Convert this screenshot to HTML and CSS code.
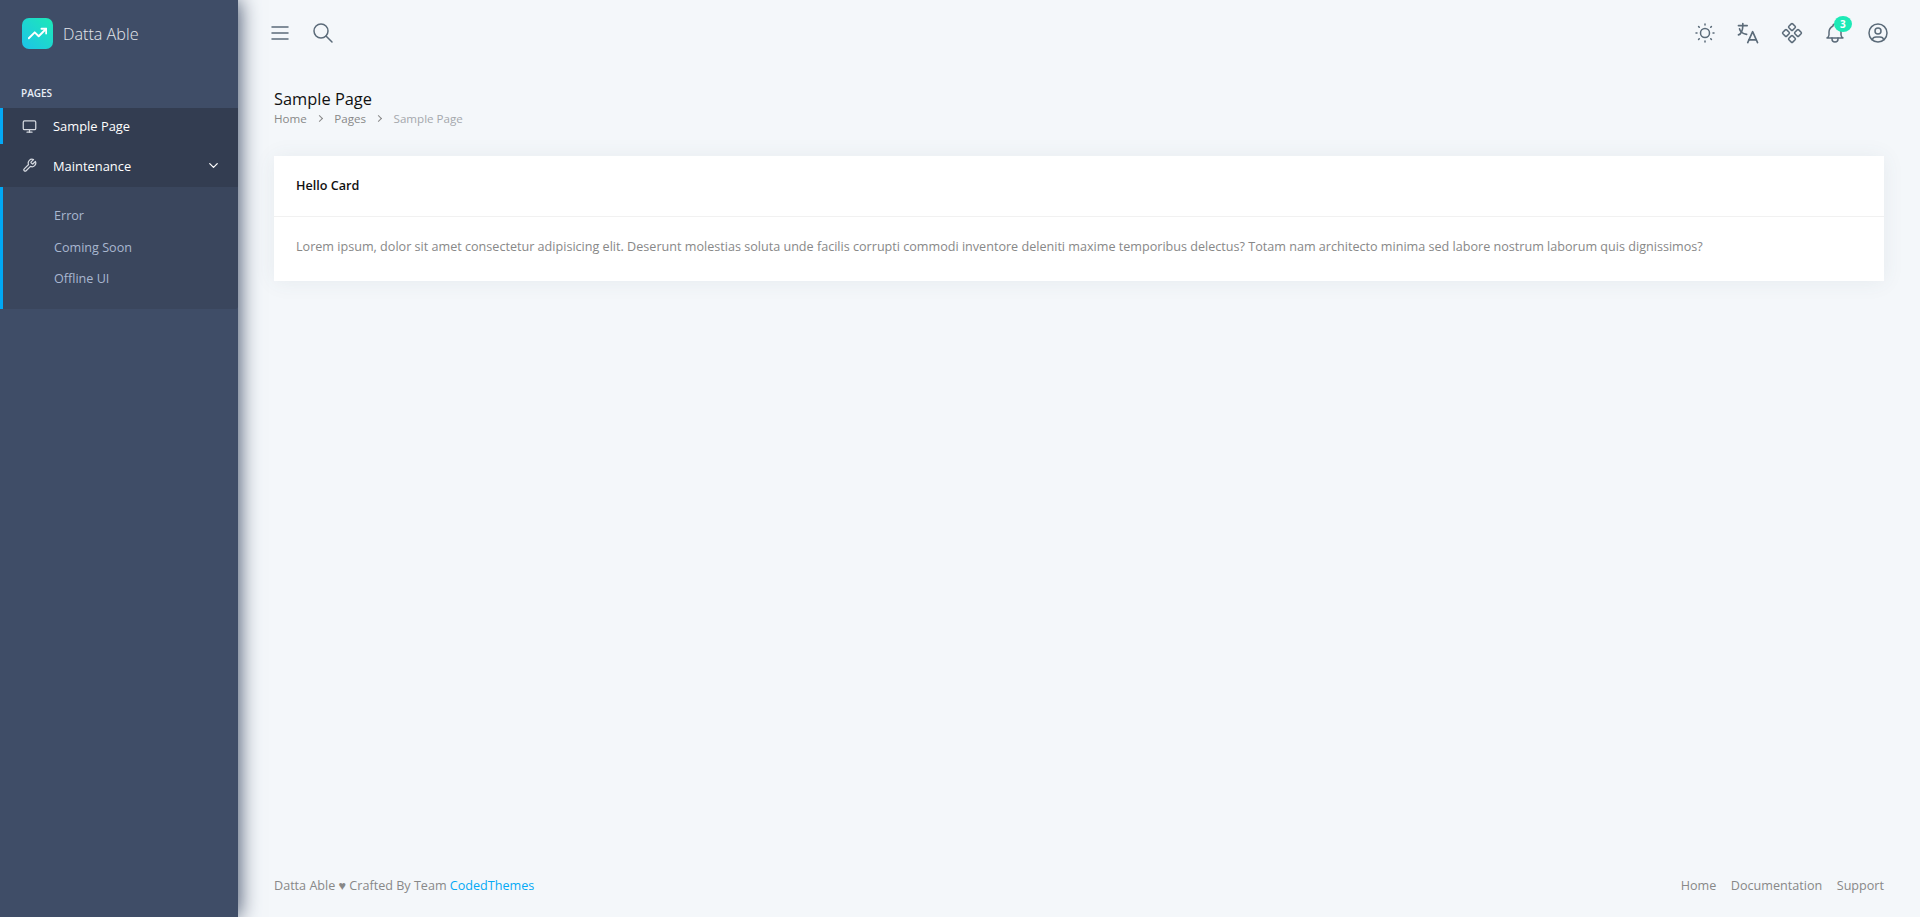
FILE: index.html
```html
<!DOCTYPE html>
<html lang="en">
<head>
  <meta charset="UTF-8">
  <meta name="viewport" content="width=device-width, initial-scale=1.0">
  <title>Sample Page | Datta Able</title>
  <link rel="stylesheet" href="styles.css">
</head>
<body>

<div class="app">
  <nav class="sidebar">
    <div class="brand">
      <span class="brand-logo">
        <svg viewBox="0 0 24 24" width="19" height="19"><polyline points="23 6 13.5 15.5 8.5 10.5 1 18"/><polyline points="17 6 23 6 23 12"/></svg>
      </span>
      <span class="brand-name">Datta Able</span>
    </div>

    <div class="nav-caption">Pages</div>

    <a class="nav-item active" href="#">
      <svg class="nav-icon" viewBox="0 0 24 24"><rect x="2" y="3" width="20" height="14" rx="2"/><line x1="8" y1="21" x2="16" y2="21"/><line x1="12" y1="17" x2="12" y2="21"/></svg>
      <span>Sample Page</span>
    </a>
    <div class="nav-group">
      <a class="nav-item open" href="#">
        <svg class="nav-icon" viewBox="0 0 24 24"><path d="M14.7 6.3a1 1 0 0 0 0 1.4l1.6 1.6a1 1 0 0 0 1.4 0l3.77-3.77a6 6 0 0 1-7.94 7.94l-6.91 6.91a2.12 2.12 0 0 1-3-3l6.91-6.91a6 6 0 0 1 7.94-7.94l-3.76 3.76z"/></svg>
        <span>Maintenance</span>
        <svg class="nav-caret" viewBox="0 0 24 24"><polyline points="6 9 12 15 18 9"/></svg>
      </a>
      <div class="nav-sub">
        <a href="#">Error</a>
        <a href="#">Coming Soon</a>
        <a href="#">Offline UI</a>
      </div>
    </div>
  </nav>

  <div class="main">
    <header class="topbar">
      <div class="topbar-group left">
        <svg class="top-icon" viewBox="0 0 24 24"><path d="M4 6h16"/><path d="M4 12h16"/><path d="M4 18h16"/></svg>
        <svg class="top-icon" viewBox="0 0 24 24"><circle cx="10" cy="10" r="7"/><path d="M21 21l-6 -6"/></svg>
      </div>
      <div class="topbar-group right">
        <svg class="top-icon" viewBox="0 0 24 24"><circle cx="12" cy="12" r="4.500"/><path d="M3 12h1m8 -9v1m8 8h1m-9 8v1m-6.400 -15.400l.7 .7m12.100 -.7l-.7 .7m0 11.400l.7 .7m-12.100 -.7l-.7 .7"/></svg>
        <svg class="top-icon" viewBox="1.250 0.750 22 22"><path d="M3.500 5h8"/><path d="M7.500 3v2c0 4.418 -1.739 8 -4 8.500"/><path d="M4.500 8c.5 2.500 3 4.500 6.500 5"/><path d="M12 20.500l4.500 -10l4.500 10"/><path d="M19.800 18h-6.600"/></svg>
        <svg class="top-icon" viewBox="0 0 24 24"><rect x="9.300" y="3.300" width="5.400" height="5.400" rx="1" transform="rotate(45 12 6)"/><rect x="9.300" y="15.300" width="5.400" height="5.400" rx="1" transform="rotate(45 12 18)"/><rect x="3.300" y="9.300" width="5.400" height="5.400" rx="1" transform="rotate(45 6 12)"/><rect x="15.300" y="9.300" width="5.400" height="5.400" rx="1" transform="rotate(45 18 12)"/></svg>
        <span class="bell">
          <svg class="top-icon" viewBox="0 0 24 24"><path d="M10 5a2 2 0 1 1 4 0a7 7 0 0 1 4 6v3a4 4 0 0 0 2 3h-16a4 4 0 0 0 2 -3v-3a7 7 0 0 1 4 -6"/><path d="M9 17v1a3 3 0 0 0 6 0v-1"/></svg>
          <span class="badge">3</span>
        </span>
        <svg class="top-icon" viewBox="0 0 24 24"><circle cx="12" cy="12" r="9"/><circle cx="12" cy="10" r="3"/><path d="M6.168 18.849a4 4 0 0 1 3.832 -2.849h4a4 4 0 0 1 3.834 2.855"/></svg>
      </div>
    </header>

    <main class="content">
      <div class="page-head">
        <h1>Sample Page</h1>
        <ul class="breadcrumb">
          <li><a href="#">Home</a></li>
          <li><a href="#">Pages</a></li>
          <li class="current">Sample Page</li>
        </ul>
      </div>

      <section class="card">
        <div class="card-head">Hello Card</div>
        <div class="card-body">Lorem ipsum, dolor sit amet consectetur adipisicing elit. Deserunt molestias soluta unde facilis corrupti commodi inventore deleniti maxime temporibus delectus? Totam nam architecto minima sed labore nostrum laborum quis dignissimos?</div>
      </section>
    </main>

    <footer class="footer">
      <div>Datta Able ♥ Crafted By Team <a class="footer-brand" href="#">CodedThemes</a></div>
      <div class="footer-links">
        <a href="#">Home</a>
        <a href="#">Documentation</a>
        <a href="#">Support</a>
      </div>
    </footer>
  </div>
</div>

</body>
</html>
```

FILE: styles.css
```css
html, body {
  margin: 0;
  padding: 0;
  height: 100%;
}

body {
  font-family: "Open Sans", sans-serif;
  font-size: 12.6px;
  color: #888;
  background: #f4f7fa;
  overflow: hidden;
}

a {
  color: inherit;
  text-decoration: none;
}

svg {
  fill: none;
  stroke: currentColor;
  stroke-linecap: round;
  stroke-linejoin: round;
}

.app {
  display: flex;
  height: 100%;
}

.sidebar {
  flex: 0 0 238px;
  background: #3f4d67;
  color: #fff;
  box-shadow: 1px 0 20px 0 #3f4d67;
  z-index: 2;
}

.brand {
  display: flex;
  align-items: center;
  gap: 10px;
  height: 66px;
  padding: 0 22px;
}

.brand-logo {
  display: flex;
  align-items: center;
  justify-content: center;
  width: 31px;
  height: 31px;
  border-radius: 7px;
  background: linear-gradient(-135deg, #1de9b6 0%, #1dc4e9 100%);
}

.brand-logo svg {
  stroke-width: 2.4;
}

.brand-name {
  padding-top: 2px;
  font-size: 16.2px;
  font-weight: 300;
  color: #e4e7ec;
}

.nav-caption {
  height: 22px;
  padding: 20px 21px 0;
  font-size: 10px;
  line-height: 14px;
  font-weight: 600;
  text-transform: uppercase;
  color: #e8edf7;
}

.nav-item {
  display: flex;
  align-items: center;
  height: 43px;
  padding: 0 17px 0 22px;
  box-sizing: border-box;
  font-size: 12.9px;
  color: #fff;
  background: #333d51;
}

.nav-item.active {
  height: 36px;
  padding: 0 17px 0 19px;
  border-left: 3px solid #04a9f5;
}

.nav-icon {
  flex: none;
  width: 15px;
  height: 15px;
  margin-right: 16px;
  stroke-width: 2;
  color: #d5d9e0;
}

.nav-caret {
  width: 15px;
  height: 15px;
  margin-left: auto;
  stroke-width: 2;
}

.nav-sub {
  display: flex;
  flex-direction: column;
  height: 122px;
  padding-top: 14px;
  box-sizing: border-box;
  border-left: 3px solid #00a8f5;
  border-bottom-right-radius: 3px;
  background: #3a465d;
}

.nav-sub a {
  height: 31.6px;
  padding-left: 51px;
  line-height: 30px;
  color: #a9b7d0;
}

.main {
  flex: 1;
  display: flex;
  flex-direction: column;
  min-width: 0;
}

.topbar {
  display: flex;
  align-items: center;
  justify-content: space-between;
  flex: none;
  height: 66px;
  padding: 0 30px;
}

.topbar-group {
  display: flex;
  align-items: center;
}

.topbar-group.left {
  gap: 19px;
}

.topbar-group.right {
  gap: 19.25px;
}

.top-icon {
  display: block;
  width: 24px;
  height: 24px;
  stroke-width: 1.5;
  color: #5b6b79;
}

.bell {
  position: relative;
  display: block;
}

.badge {
  position: absolute;
  top: -5px;
  right: -5px;
  width: 18px;
  height: 16px;
  border-radius: 50%;
  background: #1de9b6;
  color: #fff;
  font-size: 10px;
  font-weight: 700;
  line-height: 16px;
  text-align: center;
}

.content {
  flex: 1;
  padding: 22px 36px 0;
}

.page-head {
  margin-bottom: 27px;
}

h1 {
  margin: 0;
  font-size: 16.4px;
  line-height: 22px;
  font-weight: 400;
  color: #111;
}

.breadcrumb {
  display: flex;
  margin: 0;
  padding: 0;
  list-style: none;
  font-size: 11.6px;
  line-height: 18px;
  height: 19px;
  color: #888;
}

.breadcrumb li + li::before {
  content: "";
  display: inline-block;
  width: 4px;
  height: 4px;
  margin: 0 12.5px 2px 10px;
  border-top: 1px solid #888;
  border-right: 1px solid #888;
  transform: rotate(45deg);
}

.breadcrumb .current {
  color: #a5a8ad;
}

.card {
  background: #fff;
  box-shadow: 0 1px 20px 0 rgba(69, 90, 100, 0.08);
}

.card-head {
  height: 61px;
  padding: 0 22px;
  box-sizing: border-box;
  line-height: 60px;
  font-weight: 600;
  color: #111;
  border-bottom: 1px solid #f1f1f1;
}

.card-body {
  height: 64px;
  padding: 20px 22px 0;
  box-sizing: border-box;
  line-height: 20px;
}

.footer {
  display: flex;
  justify-content: space-between;
  flex: none;
  height: 41px;
  padding: 0 36px;
  line-height: 20px;
}

.footer-brand {
  color: #04a9f5;
}

.footer-links {
  display: flex;
  gap: 14.5px;
}
```
